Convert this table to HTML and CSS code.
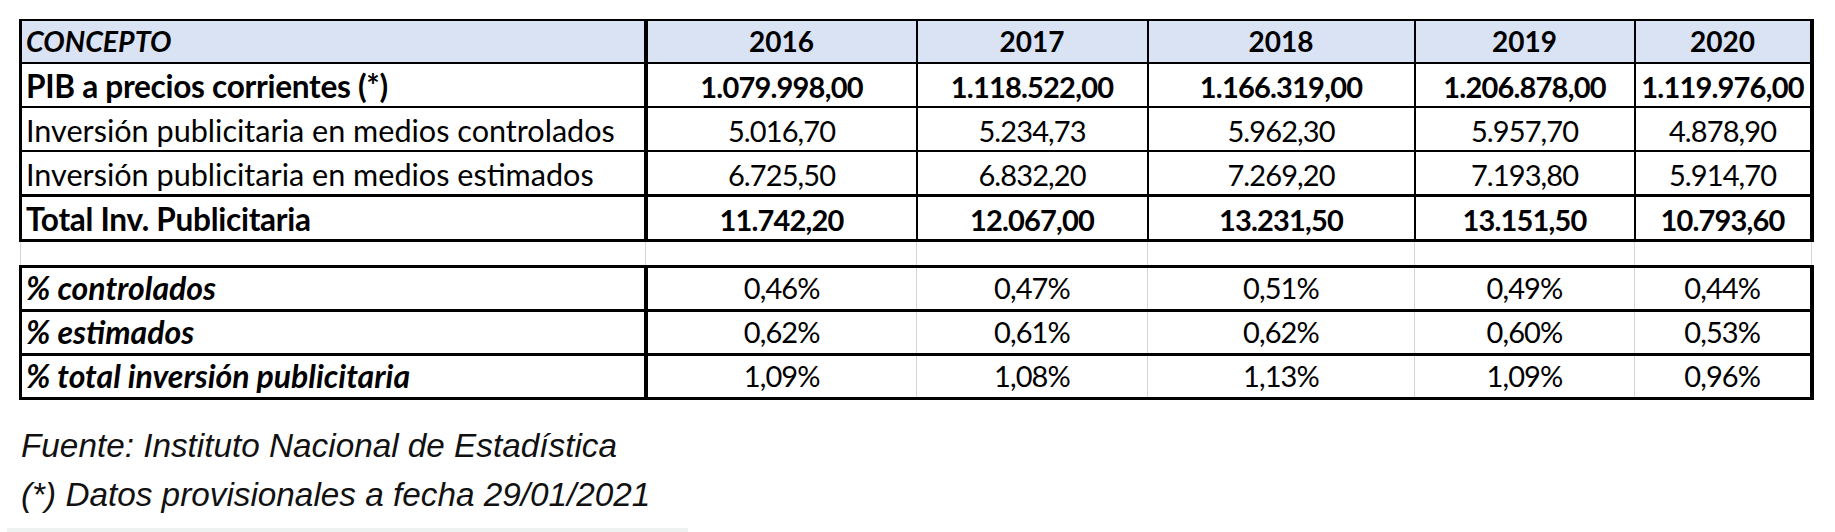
FILE: index.html
```html
<!DOCTYPE html>
<html lang="es">
<head>
<meta charset="utf-8">
<title>Inversión publicitaria</title>
<link rel="stylesheet" href="styles.css">
</head>
<body>
<div class="page">
  <table class="data">
    <colgroup>
      <col class="c-concept">
      <col class="c-2016">
      <col class="c-2017">
      <col class="c-2018">
      <col class="c-2019">
      <col class="c-2020">
    </colgroup>
    <thead>
      <tr class="head">
        <th class="concept">CONCEPTO</th>
        <th>2016</th>
        <th>2017</th>
        <th>2018</th>
        <th>2019</th>
        <th>2020</th>
      </tr>
    </thead>
    <tbody class="top">
      <tr class="strong">
        <td class="concept">PIB a precios corrientes (*)</td>
        <td>1.079.998,00</td>
        <td>1.118.522,00</td>
        <td>1.166.319,00</td>
        <td>1.206.878,00</td>
        <td>1.119.976,00</td>
      </tr>
      <tr>
        <td class="concept">Inversión publicitaria en medios controlados</td>
        <td>5.016,70</td>
        <td>5.234,73</td>
        <td>5.962,30</td>
        <td>5.957,70</td>
        <td>4.878,90</td>
      </tr>
      <tr class="pre-total">
        <td class="concept">Inversión publicitaria en medios estimados</td>
        <td>6.725,50</td>
        <td>6.832,20</td>
        <td>7.269,20</td>
        <td>7.193,80</td>
        <td>5.914,70</td>
      </tr>
      <tr class="strong total">
        <td class="concept">Total Inv. Publicitaria</td>
        <td>11.742,20</td>
        <td>12.067,00</td>
        <td>13.231,50</td>
        <td>13.151,50</td>
        <td>10.793,60</td>
      </tr>
    </tbody>
    <tbody class="spacer">
      <tr class="gap">
        <td></td><td></td><td></td><td></td><td></td><td></td>
      </tr>
    </tbody>
    <tbody class="pct">
      <tr>
        <td class="concept label">% controlados</td>
        <td>0,46%</td>
        <td>0,47%</td>
        <td>0,51%</td>
        <td>0,49%</td>
        <td>0,44%</td>
      </tr>
      <tr>
        <td class="concept label">% estimados</td>
        <td>0,62%</td>
        <td>0,61%</td>
        <td>0,62%</td>
        <td>0,60%</td>
        <td>0,53%</td>
      </tr>
      <tr>
        <td class="concept label">% total inversión publicitaria</td>
        <td>1,09%</td>
        <td>1,08%</td>
        <td>1,13%</td>
        <td>1,09%</td>
        <td>0,96%</td>
      </tr>
    </tbody>
  </table>
  <p class="note">Fuente: Instituto Nacional de Estadística</p>
  <p class="note">(*) Datos provisionales a fecha 29/01/2021</p>
  <div class="bar"></div>
</div>
</body>
</html>
```

FILE: styles.css
```css
html, body {
  margin: 0;
  padding: 0;
  background: #ffffff;
}

.page {
  padding: 19px 0 0 19px;
  display: flex;
  flex-direction: column;
  align-items: flex-start;
}

.data {
  border-collapse: collapse;
  table-layout: fixed;
  width: 1791px;
  font-family: Lato, "Liberation Sans", sans-serif;
  font-size: 28px;
  line-height: 1.2;
  color: #000;
}

.c-concept { width: 625px; }
.c-2016 { width: 271px; }
.c-2017 { width: 231px; }
.c-2018 { width: 267px; }
.c-2019 { width: 220px; }
.c-2020 { width: 177px; }

.data th,
.data td {
  padding: 0 3px;
  text-align: center;
  vertical-align: middle;
  white-space: nowrap;
  overflow: visible;
  border-left: 2px solid #000;
  border-right: 2px solid #000;
  border-top: 2px solid #000;
  border-bottom: 2px solid #000;
}

.data td {
  font-size: 29px;
  letter-spacing: -0.9px;
}

.data .concept {
  text-align: left;
  padding-left: 4px;
  border-left: 3px solid #000;
  border-right: 4px solid #000;
  font-size: 30.6px;
  letter-spacing: 0;
}

.data tr > :last-child {
  border-right: 4px solid #000;
}

.head th {
  height: 41px;
  background: #dae3f3;
  font-weight: 700;
}

.head th.concept {
  font-style: italic;
  font-size: 28.5px;
}

.top td {
  height: 38px;
  padding-top: 4px;
}

.strong td {
  font-weight: 700;
  letter-spacing: -0.8px;
}

.strong td.concept {
  font-size: 31.6px;
  letter-spacing: -0.3px;
}

.pre-total td {
  border-bottom: 3px solid #000;
}

.total td {
  border-bottom: 3px solid #000;
}

.gap td {
  height: 23px;
  padding: 0;
  border-top: 3px solid #000;
  border-bottom: 3px solid #000;
  border-left: 1px solid #d6d6d6;
  border-right: 1px solid #d6d6d6;
}

.gap td.concept {
  border-left: 1px solid #d6d6d6;
  border-right: 1px solid #d6d6d6;
}

.gap td:last-child {
  border-right: 1px solid #d6d6d6;
}

.pct td {
  height: 41px;
  border-top: 3px solid #000;
  border-bottom: 3px solid #000;
  border-left: 1px solid #d6d6d6;
  border-right: 1px solid #d6d6d6;
}

.pct td.concept {
  border-left: 3px solid #000;
  border-right: 4px solid #000;
  font-weight: 700;
  font-style: italic;
  font-size: 32px;
}

.pct td:last-child {
  border-right: 4px solid #000;
}

.note {
  margin: 0;
  font-family: "Liberation Sans", Arial, sans-serif;
  font-style: italic;
  font-size: 33.3px;
  line-height: 49px;
  color: #111;
  padding-left: 2px;
}

.note:first-of-type {
  margin-top: 21px;
}

.bar {
  margin-top: 9px;
  margin-left: -12px;
  width: 681px;
  height: 4px;
  background: #eef3f1;
}
```
